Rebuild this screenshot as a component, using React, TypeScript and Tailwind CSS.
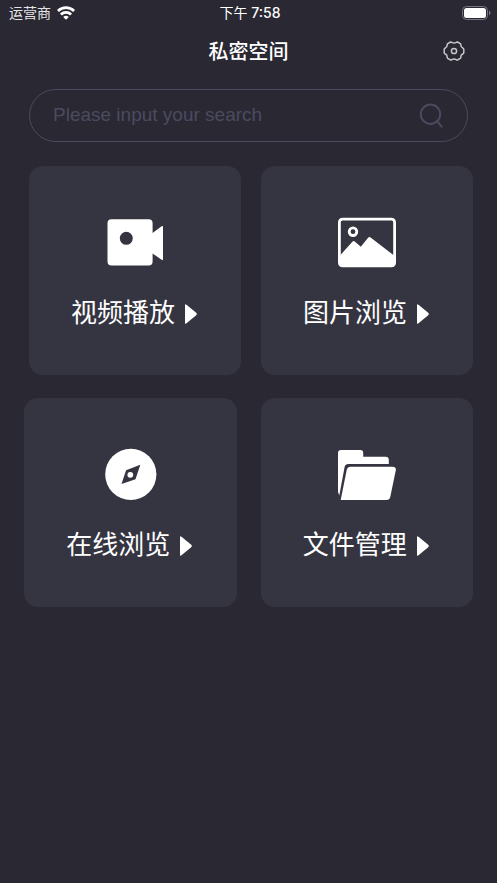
import type { ReactNode } from 'react'

function WifiIcon() {
  return (
    <svg width="18" height="14" viewBox="0 0 18 14" fill="none" stroke="#fff" strokeWidth="2.8" aria-hidden>
      <path d="M0.9 5a11.6 11.6 0 0 1 16.2 0" />
      <path d="M3.9 8.5a7.3 7.3 0 0 1 10.2 0" />
      <path d="M9 13.8L6.2 11a4 4 0 0 1 5.6 0Z" fill="#fff" stroke="none" />
    </svg>
  )
}

function BatteryIcon() {
  return (
    <svg width="29" height="14" viewBox="0 0 29 14" aria-hidden>
      <rect x="0.5" y="0.5" width="25" height="13" rx="4" fill="none" stroke="#77767e" />
      <rect x="2" y="2" width="22" height="10" rx="2.5" fill="#fff" />
      <path d="M27 4.8c2 .6 2 3.8 0 4.4z" fill="#77767e" />
    </svg>
  )
}

function GearIcon() {
  return (
    <svg width="22" height="22" viewBox="0 0 22 22" fill="none" stroke="#c6c6ca" strokeWidth="1.5" strokeLinejoin="round" aria-hidden>
      <path d="M7.6 1Q8.2 .8 8.8 1.3Q11 2.7 13.2 1.3Q13.8 .8 14.4 1L17.3 2.6Q17.8 3 17.8 3.8Q17.7 6.2 20 7.2Q20.7 7.6 20.8 8.4V11.6Q20.7 12.4 20 12.8Q17.7 13.8 17.8 16.2Q17.8 17 17.3 17.4L14.4 19Q13.8 19.2 13.2 18.7Q11 17.3 8.8 18.7Q8.2 19.2 7.6 19L4.7 17.4Q4.2 17 4.2 16.2Q4.3 13.8 2 12.8Q1.3 12.4 1.2 11.6V8.4Q1.3 7.6 2 7.2Q4.3 6.2 4.2 3.8Q4.2 3 4.7 2.6Z" />
      <circle cx="11" cy="10" r="2.6" />
    </svg>
  )
}

function SearchIcon() {
  return (
    <svg width="24" height="26" viewBox="0 0 24 26" fill="none" stroke="#4b4b60" strokeWidth="2" strokeLinecap="round" aria-hidden>
      <circle cx="11.5" cy="11.2" r="9.7" />
      <path d="M18.3 18.4L22.6 23.6" />
    </svg>
  )
}

function VideoIcon() {
  return (
    <svg width="58" height="58" viewBox="0 0 58 58" fill="#fff" aria-hidden>
      <path
        fillRule="evenodd"
        d="M5.5 5.3H42.6a4 4 0 0 1 4 4V19L55.6 12.2Q57 11.4 57 13V45Q57 46.8 55.6 45.8L46.6 39.5V47.5a4 4 0 0 1-4 4H5.5a4 4 0 0 1-4-4V9.3a4 4 0 0 1 4-4ZM20.3 17.8a6.5 6.5 0 1 0 0 13a6.5 6.5 0 1 0 0-13Z"
      />
    </svg>
  )
}

function PictureIcon() {
  return (
    <svg width="58" height="58" viewBox="0 0 58 58" aria-hidden>
      <rect x="1.4" y="5.2" width="55.2" height="46.6" rx="3" fill="none" stroke="#fff" strokeWidth="2.8" />
      <circle cx="15" cy="17.7" r="3.8" fill="none" stroke="#fff" strokeWidth="2.8" />
      <path
        d="M2 41.5L14.6 27.6Q15.6 26.4 16.8 27.5L22.8 32.8L30.3 23.6Q31.3 22.4 32.6 23.5L56 41.5V49a3 3 0 0 1-3 3H5a3 3 0 0 1-3-3Z"
        fill="#fff"
      />
    </svg>
  )
}

function CompassIcon() {
  return (
    <svg width="58" height="58" viewBox="0 0 58 58" aria-hidden>
      <circle cx="29.8" cy="28.4" r="25.6" fill="#fff" />
      <path d="M39.3 18.8L34.5 33.2L20.5 38L25.1 24.2Z" fill="#353541" />
      <circle cx="29.3" cy="28.8" r="2.9" fill="#fff" />
    </svg>
  )
}

function FolderIcon() {
  return (
    <svg width="58" height="58" viewBox="0 0 58 58" fill="#fff" aria-hidden>
      <path d="M3 4H22.5Q25.2 4 25.2 6.7V10.8H47.5Q50.8 10.8 50.8 14V18H10.5Q7.2 18 6.6 21L1.3 49.5L0 46V7Q0 4 3 4Z" />
      <path d="M12.5 20.7H54.5Q58.3 20.7 57.8 24.2L52.3 50.8Q51.6 54 48.6 54H2.7L8.8 23.6Q9.5 20.7 12.5 20.7Z" />
    </svg>
  )
}

function Arrow() {
  return (
    <svg width="12" height="20" viewBox="0 0 12 20" fill="#fff" aria-hidden>
      <path d="M0 1.2Q0 -.6 1.5 .8L11.2 8.8Q12.4 10 11.2 11.2L1.5 19.2Q0 20.6 0 18.8Z" />
    </svg>
  )
}

function Tile({ icon, label }: { icon: ReactNode; label: string }) {
  return (
    <button className="flex flex-1 flex-col items-center rounded-[14px] bg-[#353541] pb-10 pt-12 active:opacity-80">
      {icon}
      <span className="mt-5 flex items-center gap-2.5 pr-0.5 text-[26px] leading-[43px]">
        {label}
        <Arrow />
      </span>
    </button>
  )
}

export default function App() {
  return (
    <div className="min-h-screen bg-[#292833] font-['Liberation_Sans','Noto_Sans_CJK_SC',sans-serif] text-white">
      <div className="grid h-[26px] grid-cols-3 items-center pl-[9px] pr-1.5 text-sm">
        <div className="flex items-center gap-1.5 text-[#e4e4e6]">
          运营商
          <WifiIcon />
        </div>
        <div className="text-center font-['Inter','Noto_Sans_CJK_SC',sans-serif]">
          下午 <span className="font-medium">7:58</span>
        </div>
        <div className="flex justify-end">
          <BatteryIcon />
        </div>
      </div>

      <header className="grid h-[51px] grid-cols-[1fr_auto_1fr] items-center px-8">
        <h1 className="col-start-2 text-xl font-medium">私密空间</h1>
        <button aria-label="Settings" className="justify-self-end">
          <GearIcon />
        </button>
      </header>

      <form
        className="mx-[29px] mt-3 flex h-[53px] items-center rounded-full border border-[#4b4b60] pl-[23px] pr-6"
        onSubmit={e => e.preventDefault()}
      >
        <input
          type="search"
          aria-label="Search"
          placeholder="Please input your search"
          className="min-w-0 flex-1 bg-transparent text-[19px] outline-none placeholder:text-[#4b4b60]"
        />
        <button type="submit" aria-label="Submit search">
          <SearchIcon />
        </button>
      </form>

      <main className="flex flex-col gap-[23px] py-6">
        <div className="flex gap-5 pl-[29px] pr-6">
          <Tile icon={<VideoIcon />} label="视频播放" />
          <Tile icon={<PictureIcon />} label="图片浏览" />
        </div>
        <div className="flex gap-6 px-6">
          <Tile icon={<CompassIcon />} label="在线浏览" />
          <Tile icon={<FolderIcon />} label="文件管理" />
        </div>
      </main>
    </div>
  )
}
